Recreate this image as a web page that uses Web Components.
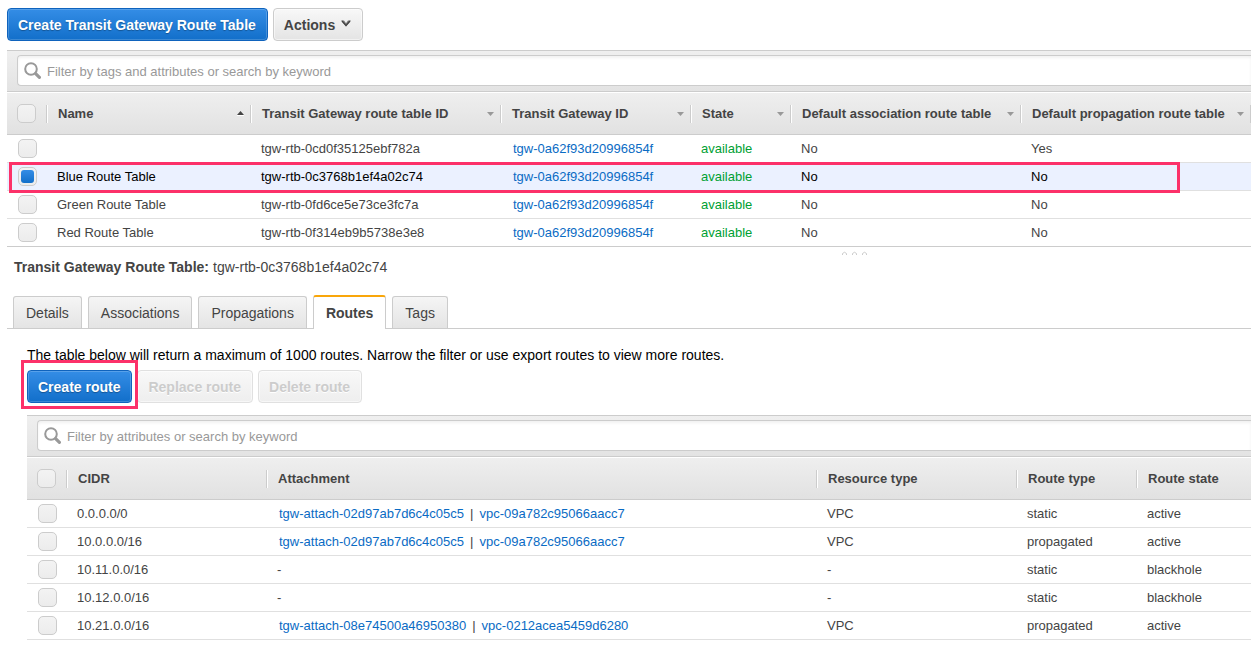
<!DOCTYPE html>
<html lang="en">
<head>
<meta charset="utf-8">
<title>Transit Gateway Route Tables</title>
<style>
body { margin: 0; background: #fff; color: #444; font: 13px/18px "Liberation Sans", Arial, sans-serif; overflow-x: hidden; }
</style>
</head>
<body>
<route-console></route-console>
<script>
function define(name, html, setup) {
  const template = document.createElement('template');
  template.innerHTML = html;
  customElements.define(name, class extends HTMLElement {
    connectedCallback() {
      if (this.shadowRoot) return;
      this.attachShadow({ mode: 'open' }).append(template.content.cloneNode(true));
      if (setup) setup(this, this.shadowRoot);
    }
  });
}

/* Outline that draws attention to the element it sits in */
define('focus-frame', `
<style>
  :host { position: absolute; display: block; box-sizing: border-box; border: 3px solid #fc3169; pointer-events: none; z-index: 2; }
</style>`);

/* Push button: primary, normal, disabled; optional menu arrow */
define('push-button', `
<style>
  :host { display: block; position: relative; }
  button {
    display: flex; align-items: center; gap: 6px; height: 33px; padding: 0 11px 0 10px; box-sizing: border-box;
    border: 1px solid #ccc; border-radius: 4px; background: linear-gradient(#f8f8f8, #e4e4e4);
    box-shadow: inset 0 0 0 1px rgba(255,255,255,.5);
    color: #444; font: bold 14px/18px "Liberation Sans", Arial, sans-serif; white-space: nowrap;
  }
  :host([primary]) button {
    color: #fff; border-color: #0f63bd; background: linear-gradient(#348de6, #126fca);
    box-shadow: inset 0 0 0 1px rgba(255,255,255,.18); text-shadow: 0 1px 1px rgba(0,0,0,.3);
  }
  button:disabled { color: #ccc; border-color: #e0e0e0; background: linear-gradient(#f8f8f8, #eee); text-shadow: 0 1px 0 #fff; }
  svg { display: none; }
  :host([menu]) svg { display: block; }
</style>
<button type="button"><slot></slot><svg width="10" height="9" viewBox="0 0 10 9" aria-hidden="true"><path d="M0 .5h3L5 3.200 7 .5h3L5 6.500z" fill="#777"/><path d="M1 1l4 4.600L9 1" fill="none" stroke="#444" stroke-width="1.2"/></svg></button>
<slot name="over"></slot>`, (host, root) => {
  root.querySelector('button').disabled = host.hasAttribute('disabled');
});

/* Filter band with magnifier and text field */
define('filter-bar', `
<style>
  :host { display: block; box-sizing: border-box; height: 42px; padding: 4px 0 5px 10px; border: solid #ccc; border-width: 1px 0; background: linear-gradient(#efefef, #e3e3e3); }
  label { display: flex; align-items: center; gap: 6px; box-sizing: border-box; height: 31px; padding-left: 6px; border: 1px solid #ccc; border-right: 0; border-radius: 4px 0 0 4px; background: #fff; box-shadow: inset 0 2px 3px rgba(0,0,0,.06); }
  input { flex: 1; min-width: 0; border: 0; padding: 2px 0 0; background: none; outline: 0; color: #444; font: 13px/18px "Liberation Sans", Arial, sans-serif; }
  input::placeholder { color: #999; opacity: 1; }
</style>
<label><svg width="17" height="17" viewBox="0 0 17 17" aria-hidden="true"><circle cx="7" cy="7" r="5.800" fill="none" stroke="#999" stroke-width="2"/><path d="M11.6 11.6l3.800 3.800" stroke="#999" stroke-width="3.200" stroke-linecap="round"/></svg><input type="text"></label>`,
(host, root) => {
  const input = root.querySelector('input');
  input.placeholder = host.getAttribute('hint');
  input.setAttribute('aria-label', host.getAttribute('hint'));
});

/* Data grid. Takes { columns, rows } through its data property */
customElements.define('data-grid', class extends HTMLElement {
  set data({ columns, rows }) {
    const root = this.shadowRoot || this.attachShadow({ mode: 'open' });
    const link = t => `<a href="#">${t}</a>`;
    const cell = v => v.links ? v.links.map(link).join('|') : v.state ? `<span class="ok">${v.state}</span>` : v;
    root.innerHTML = `
<style>
  :host { display: block; }
  table { width: 100%; border-collapse: separate; border-spacing: 0; table-layout: fixed; }
  th, td { box-sizing: border-box; padding: 0 10px; text-align: left; vertical-align: middle; white-space: nowrap; }
  th { height: 43px; padding: 0; border-bottom: 1px solid #ccc; font-weight: bold; }
  thead { background: linear-gradient(#efefef, #e1e1e1); }
  thead th { border-top: 1px solid #fff; }
  .head { display: flex; align-items: center; height: 18px; padding: 0 6px 0 10px; border: solid; border-width: 0 1px; border-color: transparent #ccc transparent #fff; }
  th:first-child .head { border-left: 0; }
  .head svg { margin-left: auto; flex: none; }
  :host([open-end]) th:last-child .head { border-right-color: transparent; }
  td { height: 28px; border-bottom: 1px solid #e0e0e0; color: #444; }
  :host([ruled]) tbody tr:last-child td { border-bottom-color: #ccc; }
  tr { position: relative; }
  tr.on td { background: #ebf1ff; color: #000; }
  td:first-child { padding-left: 11px; padding-right: 0; }
  a { margin: 0 2px; color: #0a6bc4; text-decoration: none; }
  a:not(:last-child) { margin-right: 6px; }
  a + a { margin-left: 6px; }
  .ok { color: #00a033; }
  input { appearance: none; display: block; flex: none; box-sizing: border-box; width: 19px; height: 19px; margin: 0; padding: 2px; border: 1px solid #ccc; border-radius: 5px; background: linear-gradient(#f3f3f3, #ececec); }
  input:checked::before { content: ""; display: block; height: 13px; border-radius: 3px; background: linear-gradient(#348de6, #126fca); }
  focus-frame { inset: -1px 71px -2px 2px; }
</style>
<table>
  <colgroup><col style="width:40px">${columns.map(c => `<col${c.width ? ` style="width:${c.width}px"` : ''}>`).join('')}</colgroup>
  <thead><tr><th scope="col"><div class="head"><input type="checkbox" aria-label="Select all"></div></th>${columns.map(c => `<th scope="col"><div class="head">${c.title}${
    c.sort === 'up' ? '<svg width="7" height="5" viewBox="0 0 7 5"><path d="M0 4L3.5 0 7 4z" fill="#444"/><path d="M0 4.5h7" stroke="#fff"/></svg>'
    : c.sort ? '<svg width="7" height="4" viewBox="0 0 7 4"><path d="M0 0h7L3.5 4z" fill="#999"/></svg>' : ''}</div></th>`).join('')}</tr></thead>
  <tbody>${rows.map(r => `<tr class="${r.on ? 'on' : ''}"><td><input type="checkbox" aria-label="Select row"${r.on ? ' checked' : ''}>${r.on ? '<focus-frame></focus-frame>' : ''}</td>${r.cells.map(v => `<td>${cell(v)}</td>`).join('')}</tr>`).join('')}</tbody>
</table>`;
  }
});

/* One tab */
define('tab-item', `
<style>
  :host { display: block; }
  button { display: block; box-sizing: border-box; height: 32px; padding: 0 12px; border: 1px solid #ccc; border-bottom: 0; border-radius: 3px 3px 0 0; background: linear-gradient(#f5f5f5, #e4e4e4); color: #444; font: 14px/18px "Liberation Sans", Arial, sans-serif; white-space: nowrap; }
  :host([selected]) { margin-bottom: -1px; }
  :host([selected]) button { height: 34px; border-top: 2px solid #f9a60a; background: #fff; font-weight: bold; }
</style>
<button type="button" role="tab"><slot></slot></button>`, (host, root) => {
  root.querySelector('button').setAttribute('aria-selected', host.hasAttribute('selected'));
});

define('tab-strip', `
<style>
  :host { display: flex; align-items: flex-end; gap: 6px; padding-left: 6px; border-bottom: 1px solid #ccc; }
</style>
<slot></slot>`);

define('route-console', `
<style>
  :host { display: block; padding: 8px 0 17px 7px; }
  .bar { display: flex; gap: 5px; }
  .main { margin-top: 9px; }
  .grip { display: flex; justify-content: center; height: 11px; padding-left: 450px; }
  .grip svg { margin-top: 3px; }
  h2 { margin: 0; padding: 0 7px; font-size: 14px; line-height: 18px; font-weight: bold; display: flex; gap: 4px; }
  h2 span { font-weight: normal; }
  tab-strip { margin-top: 19px; }
  section { padding: 17px 0 0 20px; }
  p { margin: 0 0 6px; color: #000; font-size: 14px; line-height: 18px; }
  .routes { margin-top: 12px; }
  focus-frame { inset: -10px -6px -6px -6px; }
</style>
<div class="bar">
  <push-button primary>Create Transit Gateway Route Table</push-button>
  <push-button menu>Actions</push-button>
</div>
<div class="main">
  <filter-bar hint="Filter by tags and attributes or search by keyword"></filter-bar>
  <data-grid id="tables" ruled></data-grid>
</div>
<div class="grip"><svg width="27" height="6" viewBox="0 0 27 6" fill="none" stroke="#ccc" aria-hidden="true"><path d="M1.500 5V3.500Q3.500 1 5.500 3.500V5M11.500 5V3.500Q13.500 1 15.500 3.500V5M21.500 5V3.500Q23.500 1 25.500 3.500V5"/></svg></div>
<h2>Transit Gateway Route Table: <span>tgw-rtb-0c3768b1ef4a02c74</span></h2>
<tab-strip role="tablist">
  <tab-item>Details</tab-item><tab-item>Associations</tab-item><tab-item>Propagations</tab-item><tab-item selected>Routes</tab-item><tab-item>Tags</tab-item>
</tab-strip>
<section>
  <p>The table below will return a maximum of 1000 routes. Narrow the filter or use export routes to view more routes.</p>
  <div class="bar">
    <push-button primary>Create route<focus-frame slot="over"></focus-frame></push-button>
    <push-button disabled>Replace route</push-button>
    <push-button disabled>Delete route</push-button>
  </div>
  <div class="routes">
    <filter-bar hint="Filter by attributes or search by keyword"></filter-bar>
    <data-grid id="routes" open-end></data-grid>
  </div>
</section>`, (host, root) => {
  const gateway = { links: ['tgw-0a62f93d20996854f'] };
  const up = { state: 'available' };
  root.getElementById('tables').data = {
    columns: [
      { title: 'Name', width: 204, sort: 'up' },
      { title: 'Transit Gateway route table ID', width: 250, sort: 'down' },
      { title: 'Transit Gateway ID', width: 190, sort: 'down' },
      { title: 'State', width: 100, sort: 'down' },
      { title: 'Default association route table', width: 230, sort: 'down' },
      { title: 'Default propagation route table', sort: 'down' }
    ],
    rows: [
      { cells: ['', 'tgw-rtb-0cd0f35125ebf782a', gateway, up, 'No', 'Yes'] },
      { on: true, cells: ['Blue Route Table', 'tgw-rtb-0c3768b1ef4a02c74', gateway, up, 'No', 'No'] },
      { cells: ['Green Route Table', 'tgw-rtb-0fd6ce5e73ce3fc7a', gateway, up, 'No', 'No'] },
      { cells: ['Red Route Table', 'tgw-rtb-0f314eb9b5738e3e8', gateway, up, 'No', 'No'] }
    ]
  };
  const first = { links: ['tgw-attach-02d97ab7d6c4c05c5', 'vpc-09a782c95066aacc7'] };
  const second = { links: ['tgw-attach-08e74500a46950380', 'vpc-0212acea5459d6280'] };
  root.getElementById('routes').data = {
    columns: [
      { title: 'CIDR', width: 200 }, { title: 'Attachment', width: 550 }, { title: 'Resource type', width: 200 },
      { title: 'Route type', width: 120 }, { title: 'Route state' }
    ],
    rows: [
      { cells: ['0.0.0.0/0', first, 'VPC', 'static', 'active'] },
      { cells: ['10.0.0.0/16', first, 'VPC', 'propagated', 'active'] },
      { cells: ['10.11.0.0/16', '-', '-', 'static', 'blackhole'] },
      { cells: ['10.12.0.0/16', '-', '-', 'static', 'blackhole'] },
      { cells: ['10.21.0.0/16', second, 'VPC', 'propagated', 'active'] }
    ]
  };
});
</script>
</body>
</html>
